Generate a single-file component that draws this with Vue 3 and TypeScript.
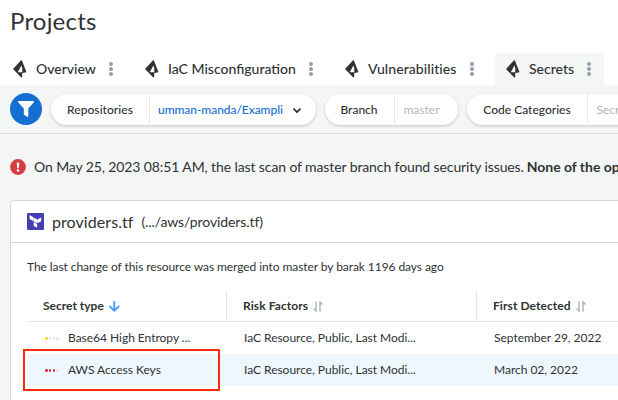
<script setup lang="ts">
interface Tab { key: string; label: string; active?: boolean }
interface Filter { key: string; label: string; value: string; open?: boolean }
interface Column { key: string; label: string; sorted?: boolean }
interface Row { type: string; level: number; severity: string; risk: string; date: string; selected?: boolean }

const tabs: Tab[] = [
  { key: 'overview', label: 'Overview' },
  { key: 'iac', label: 'IaC Misconfiguration' },
  { key: 'vuln', label: 'Vulnerabilities' },
  { key: 'secrets', label: 'Secrets', active: true },
]
const filters: Filter[] = [
  { key: 'repo', label: 'Repositories', value: 'umman-manda/Exampli', open: true },
  { key: 'branch', label: 'Branch', value: 'master' },
  { key: 'code', label: 'Code Categories', value: 'Secr' },
]
const columns: Column[] = [
  { key: 'type', label: 'Secret type', sorted: true },
  { key: 'risk', label: 'Risk Factors' },
  { key: 'date', label: 'First Detected' },
]
const rows: Row[] = [
  { type: 'Base64 High Entropy ...', level: 1, severity: 'low', risk: 'IaC Resource, Public, Last Modi...', date: 'September 29, 2022' },
  { type: 'AWS Access Keys', level: 3, severity: 'high', risk: 'IaC Resource, Public, Last Modi...', date: 'March 02, 2022', selected: true },
]
</script>

<template>
  <div class="page">
    <h1 class="title"><span>Projects</span></h1>
    <nav class="tabs">
      <a v-for="t in tabs" :key="t.key" class="tab" :class="[t.key, { active: t.active }]">
        <svg class="prism" width="14" height="18" viewBox="0 0 14 18">
          <path fill-rule="evenodd" d="M8.3 0L9 .8L13.5 12.2L9.2 12.9V17L8.3 17.6L0 9zM8.3 5.6L4.8 12.2H9.3V8z" fill="#303234" />
        </svg>
        <span class="label">{{ t.label }}</span>
        <svg class="dots" width="4" height="14" viewBox="0 0 4 14" fill="#929fad">
          <circle cx="2" cy="2.1" r="2" /><circle cx="2" cy="7" r="2" /><circle cx="2" cy="11.9" r="2" />
        </svg>
      </a>
    </nav>
    <div class="toolbar">
      <button class="filter-btn">
        <svg width="32" height="32" viewBox="0 0 32 32">
          <path d="M8.6 8H23.4Q24.6 8.2 23.7 9.4L18.3 15.5V23.2Q17.8 24.4 16.7 23.6L14.4 22Q13.8 21.5 13.8 20.8V15.5L8.3 9.4Q7.4 8.2 8.6 8z" fill="#fff" />
        </svg>
      </button>
      <div v-for="f in filters" :key="f.key" class="pill" :class="f.key">
        <span class="name"><span>{{ f.label }}</span></span>
        <span class="value" :class="{ open: f.open }">
          <span>{{ f.value }}</span>
          <svg v-if="f.open" width="8" height="6" viewBox="0 0 8 6"><path d="M1 1.2L4 4.2L7 1.2" fill="none" stroke="#303234" stroke-width="1.8" stroke-linecap="round" stroke-linejoin="round" /></svg>
        </span>
      </div>
    </div>
    <div class="alert">
      <svg width="16" height="16" viewBox="0 0 16 16">
        <circle cx="8" cy="8" r="7.9" fill="#d63c41" />
        <path d="M6.7 3.8Q8 3.2 9.3 3.8L8.8 9Q8 9.6 7.2 9z" fill="#fff" /><circle cx="8" cy="11.5" r="1.3" fill="#fff" />
      </svg>
      <span class="msg">On May 25, 2023 08:51 AM, the last scan of master branch found security issues.</span>
      <strong>None of the op</strong>
    </div>
    <section class="card">
      <header class="card-head">
        <svg width="17" height="17" viewBox="0 0 17 17">
          <rect width="17" height="17" rx="1.2" fill="#443eb2" />
          <path d="M2.6 2.1L6.1 4.1V7.9L2.6 5.9zM6.4 4.3L10.2 6.4V10.3L6.4 8.3zM14.2 4.4V8.3L10.4 10.3V6.4zM6.6 9L10.1 11V14.8L6.6 12.8z" fill="#fff" />
        </svg>
        <span class="file">providers.tf</span>
        <span class="path">(.../aws/providers.tf)</span>
      </header>
      <div class="card-body">
        <p class="note"><span>The last change of this resource was merged into master by barak 1196 days ago</span></p>
        <div class="table">
          <div class="tr head">
            <div v-for="c in columns" :key="c.key" class="th" :class="c.key">
              <span>{{ c.label }}</span>
              <svg v-if="c.sorted" width="11" height="11" viewBox="0 0 11 11"><path d="M5.3 0.8V9.5M1 5.5L5.3 9.8L9.6 5.5" fill="none" stroke="#409cf7" stroke-width="1.8" stroke-linecap="round" stroke-linejoin="round" /></svg>
              <svg v-else width="10" height="11" viewBox="0 0 10 11"><path d="M3 .3V9.5M.5 7.5L3 10L3 7M7 10.7V1.5M9.5 3.5L7 1V4" fill="none" stroke="#b3b3b3" stroke-width="1.4" /></svg>
            </div>
          </div>
          <div v-for="r in rows" :key="r.type" class="tr" :class="{ selected: r.selected }">
            <div class="td type">
              <span class="severity"><i v-for="n in 4" :key="n" :class="{ [r.severity]: n <= r.level }"></i></span>
              <span>{{ r.type }}</span>
            </div>
            <div class="td risk"><span>{{ r.risk }}</span></div>
            <div class="td date"><span>{{ r.date }}</span></div>
            <div v-if="r.selected" class="highlight"></div>
          </div>
        </div>
      </div>
    </section>
  </div>
</template>

<style>
body { margin: 0; overflow: hidden; }
</style>
<style scoped>
* { box-sizing: border-box; }
.page { width: 618px; height: 400px; overflow: hidden; display: flex; flex-direction: column; background: #f4f6f6; color: #303234; font-family: Lato, sans-serif; white-space: nowrap; }
svg { flex: none; display: block; }
.title { margin: 0; height: 53px; padding: 6px 0 0 10px; flex: none; background: #fff; font-size: 24px; line-height: 30px; font-weight: 400; letter-spacing: .2px; }
.tabs { height: 32px; flex: none; display: flex; gap: 8px; padding-left: 2px; background: #fff; }
.tab { flex: none; display: flex; align-items: center; padding: 0 13px 0 11px; border-radius: 4px 4px 0 0; font-size: 14px; font-weight: 500; }
.tab.overview { width: 124px; }
.tab.iac { width: 192px; }
.tab.vuln { width: 153px; letter-spacing: .08px; }
.tab.secrets { width: 109px; }
.tab.active { background: #f4f6f6; }
.label { padding-bottom: 1px; }
.prism { margin-right: 9px; }
.dots { margin-left: auto; }
.toolbar { height: 49px; flex: none; display: flex; align-items: flex-start; padding: 8px 0 0 10px; border-bottom: 1px solid #d9dcdd; }
.filter-btn { flex: none; width: 32px; height: 32px; padding: 0; border: 0; border-radius: 50%; background: #146fd1; margin-right: 9px; }
.pill { flex: none; display: flex; height: 31px; margin: 1px 9px 0 0; border-radius: 16px; background: #fff; box-shadow: 0 1px 3px rgba(0,0,0,.2); font-size: 12px; font-weight: 500; }
.pill.repo { width: 264.5px; }
.pill.branch { width: 133px; }
.pill.code { width: 200px; }
.name { display: flex; align-items: center; justify-content: center; padding-bottom: 1px; border-right: 1px solid #e6e8e9; }
.repo .name { width: 99px; letter-spacing: .05px; }
.branch .name { width: 70px; }
.code .name { width: 121px; padding-left: 1px; }
.value { display: flex; align-items: center; padding: 0 0 1px 9px; color: #b4b4b4; font-weight: 400; }
.value.open { color: #146fd1; font-weight: 500; gap: 10px; padding-left: 8px; letter-spacing: -.06px; }
.value svg { margin-top: 3px; }
.alert { height: 66px; flex: none; display: flex; align-items: center; padding-left: 10px; font-size: 14px; }
.msg { margin: 0 3px 2px 8px; letter-spacing: -.108px; }
.alert strong { margin-bottom: 2px; letter-spacing: -.04px; }
.card { flex: 1; width: 640px; margin-left: 10px; border: 1px solid #d5d8d9; border-bottom: 0; border-radius: 5px 5px 0 0; background: #fff; }
.card-head { height: 42px; display: flex; align-items: center; padding-left: 16px; border-bottom: 1px solid #d5d8d9; }
.file { margin-left: 8px; font-size: 16px; letter-spacing: .07px; }
.path { margin-left: 8px; font-size: 14px; letter-spacing: -.1px; }
.card-body { padding-left: 16px; }
.note { margin: 0; height: 48px; line-height: 48px; font-size: 12px; letter-spacing: -.07px; }
.tr { position: relative; display: grid; grid-template-columns: 200px 250px 174px; height: 32px; align-items: center; font-size: 12px; letter-spacing: -.02px; }
.tr.head { height: 31px; border-bottom: 1px solid #e4e6e7; align-items: stretch; font-weight: 700; letter-spacing: 0; }
.th { display: flex; align-items: center; gap: 5px; padding-left: 16px; border-right: 1px solid #e4e6e7; }
.th span { padding-bottom: 2px; }
.th svg { margin-top: 1px; }
.th.risk, .th.date { padding-left: 16px; letter-spacing: .08px; }
.td { display: flex; align-items: center; padding-left: 17px; }
.td > span:last-child { padding-bottom: 2px; }
.td.type { padding-left: 18px; }
.td .severity { display: flex; gap: 1.2px; width: 23px; }
.severity i { width: 2.6px; height: 3px; border-radius: 1.3px; background: #e3e6e9; }
.severity i.low { background: #fcd237; }
.severity i.high { background: #d2353c; }
.selected { background: #eff7fe; }
.highlight { position: absolute; left: -4px; top: -5px; width: 197px; height: 42px; border: 2px solid #fb2b0c; }
</style>
